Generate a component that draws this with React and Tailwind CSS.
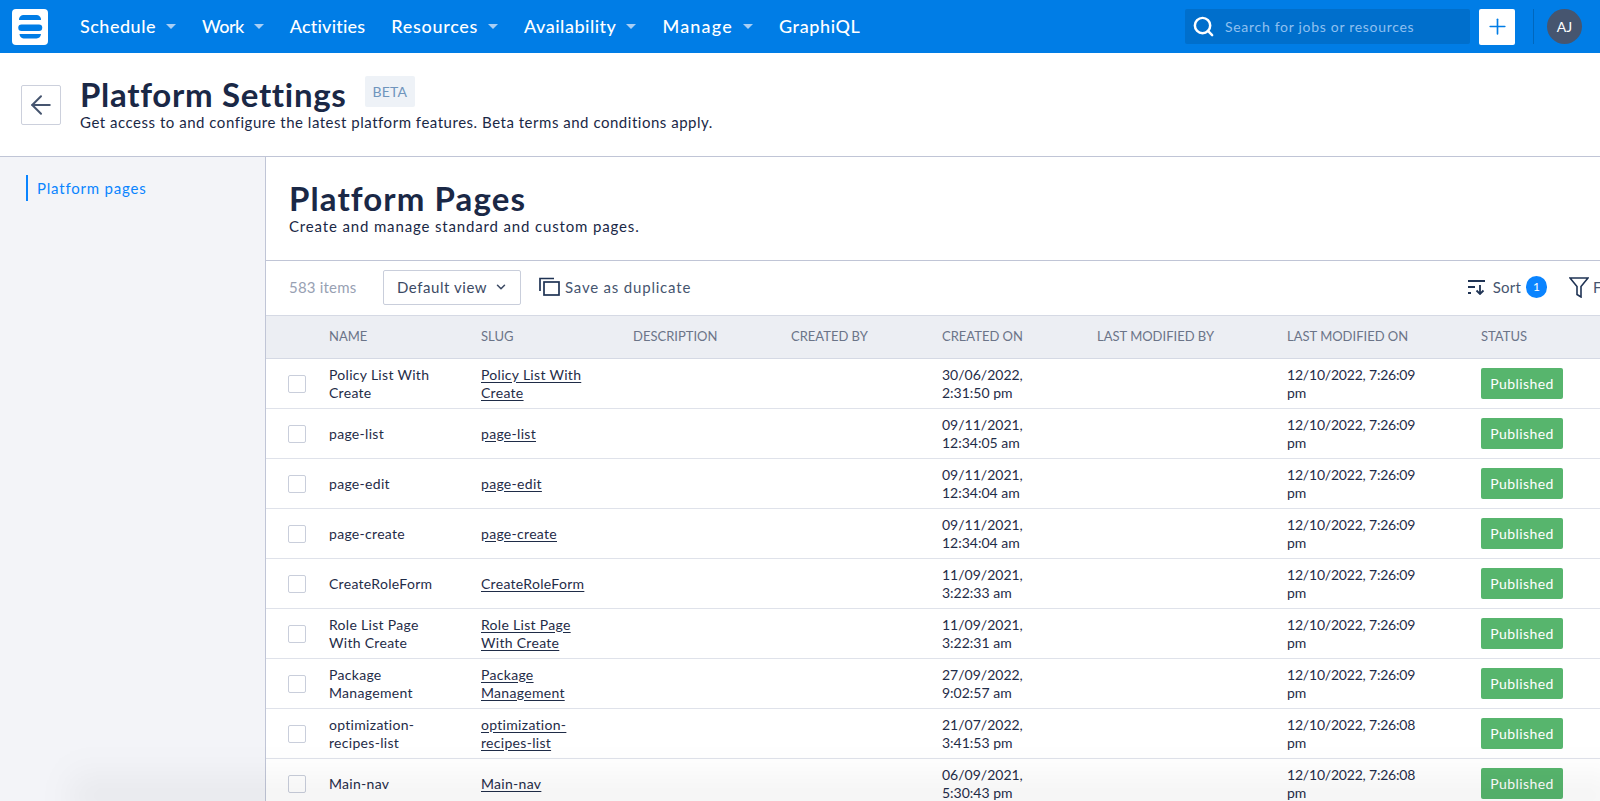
import { ArrowLeft, Search, Plus, ChevronDown } from "lucide-react";

const font = "font-['Lato','Liberation_Sans',sans-serif]";

const navItems = [
  { label: "Schedule", caret: true, track: "tracking-[0.5px]" },
  { label: "Work", caret: true, track: "tracking-[-0.5px]" },
  { label: "Activities", track: "tracking-[0.2px]" },
  { label: "Resources", caret: true, track: "tracking-[0.7px]" },
  { label: "Availability", caret: true, track: "tracking-[0.5px]" },
  { label: "Manage", caret: true, track: "tracking-[1.2px]" },
  { label: "GraphiQL", track: "tracking-[0.6px]" },
];

const rows = [
  ["Policy List With\nCreate", "30/06/2022,\n2:31:50 pm", "7:26:09"],
  ["page-list", "09/11/2021,\n12:34:05 am", "7:26:09"],
  ["page-edit", "09/11/2021,\n12:34:04 am", "7:26:09"],
  ["page-create", "09/11/2021,\n12:34:04 am", "7:26:09"],
  ["CreateRoleForm", "11/09/2021,\n3:22:33 am", "7:26:09"],
  ["Role List Page\nWith Create", "11/09/2021,\n3:22:31 am", "7:26:09"],
  ["Package\nManagement", "27/09/2022,\n9:02:57 am", "7:26:09"],
  ["optimization-\nrecipes-list", "21/07/2022,\n3:41:53 pm", "7:26:08"],
  ["Main-nav", "06/09/2021,\n5:30:43 pm", "7:26:08"],
];

const cols = "grid grid-cols-[63px_152px_152px_158px_151px_155px_190px_194px_1fr] items-center";

function Logo() {
  return (
    <div className="flex h-[36px] w-[36px] shrink-0 items-center justify-center rounded-[4px] bg-white">
      <svg width="36" height="36" viewBox="0 0 36 36" fill="#007de6">
        <path d="M11 6h14a4.5 4.5 0 0 1 4 5H7a4.5 4.5 0 0 1 4-5Z" />
        <path d="M9.5 15.5H27a3.2 3.2 0 0 1 0 6.5H9.5a3.2 3.2 0 0 1 0-6.5Z" />
        <path d="M7.5 25H29a5 5 0 0 1-4.5 4.5h-13A5 5 0 0 1 7.5 25Z" />
      </svg>
    </div>
  );
}

function TopBar() {
  return (
    <header className="flex h-[53px] shrink-0 items-center bg-[#007de6] pl-[12px] pr-[18px] text-white">
      <Logo />
      <nav className="ml-[32px] flex items-center gap-[26px] text-[18px] font-medium">
        {navItems.map((item) => (
          <div key={item.label} className="flex items-center gap-[10px]">
            <span className={item.track}>{item.label}</span>
            {item.caret && <span className="h-0 w-0 border-x-[5px] border-t-[5px] border-x-transparent border-t-[#a8cff5]" />}
          </div>
        ))}
      </nav>
      <div className="ml-auto flex h-[35px] w-[285px] items-center gap-[10px] rounded-[2px] bg-[#006fcc] pl-[7px]">
        <Search size={23} strokeWidth={2.6} className="text-white" />
        <span className="text-[14px] tracking-[0.7px] text-[#8fc0f0]">Search for jobs or resources</span>
      </div>
      <button className="ml-[9px] flex h-[36px] w-[36px] items-center justify-center rounded-[2px] bg-white text-[#007de6]">
        <Plus size={25} strokeWidth={1.6} />
      </button>
      <div className="ml-[18px] h-[35px] w-px bg-[#0067bd]" />
      <div className="ml-[13px] flex h-[35px] w-[35px] items-center justify-center rounded-full bg-[#46556f] text-[14px] text-white">AJ</div>
    </header>
  );
}

function PageHeader() {
  return (
    <section className="flex h-[104px] shrink-0 border-b border-[#c0c5d6] pl-[21px]">
      <button className="mt-[32px] flex h-[40px] w-[40px] items-center justify-center rounded-[2px] border border-[#ccd0dc] text-[#46556f]">
        <ArrowLeft size={30} strokeWidth={1.6} />
      </button>
      <div className="ml-[19px] pt-[22px]">
        <div className="flex items-start">
          <h1 className="text-[33px] font-bold leading-[38px] tracking-[0.7px] text-[#1a2846]">Platform Settings</h1>
          <span className="ml-[18px] mt-[1px] flex h-[31px] items-center rounded-[2px] bg-[#eef2f7] px-[8px] text-[14px] tracking-[0.2px] text-[#6f95bd]">BETA</span>
        </div>
        <p className="text-[15px] leading-[18px] tracking-[0.52px] text-[#1a2846]">Get access to and configure the latest platform features. Beta terms and conditions apply.</p>
      </div>
    </section>
  );
}

function Toolbar() {
  return (
    <div className="flex h-[54px] shrink-0 items-center pb-[2px] pl-[23px] text-[15px] tracking-[0.2px]">
      <span className="w-[70px] text-[#98a1b3]">583 items</span>
      <div className="ml-[24px] flex h-[35px] w-[138px] items-center justify-between rounded-[2px] border border-[#c9cedb] pl-[13px] pr-[12px] tracking-[0.55px] text-[#3c4a64]">
        <span>Default view</span>
        <ChevronDown size={14} strokeWidth={2.6} />
      </div>
      <svg className="ml-[18px] text-[#1f3354]" width="22" height="20" viewBox="0 0 22 20" fill="none" stroke="currentColor" strokeWidth="1.7">
        <path d="M1 14V1.5h14" />
        <rect x="5" y="5" width="15" height="13" />
      </svg>
      <span className="ml-[4px] tracking-[0.8px] text-[#46556f]">Save as duplicate</span>
      <div className="ml-auto flex items-center">
        <svg className="text-[#1f3354]" width="19" height="16" viewBox="0 0 19 16" fill="none" stroke="currentColor" strokeWidth="1.8">
          <path d="M1 2h17M1 8h7M1 14h3M13 6v9M9.5 11.5 13 15l3.5-3.5" />
        </svg>
        <span className="ml-[7px] text-[#46556f]">Sort</span>
        <span className="ml-[5px] flex h-[22px] w-[21px] items-center justify-center rounded-full bg-[#0a84ff] text-[12px] text-white">1</span>
        <svg className="ml-[22px] mr-[-4px] text-[#1f3354]" width="20" height="21" viewBox="0 0 20 21" fill="none" stroke="currentColor" strokeWidth="1.6">
          <path d="M1 1h18l-7 8.5V20l-4-2.5v-8Z" />
        </svg>
        <span className="ml-[8px] w-[7px] overflow-hidden text-[#46556f]">Filter</span>
      </div>
    </div>
  );
}

function TableHeader() {
  const heads = ["NAME", "SLUG", "DESCRIPTION", "CREATED BY", "CREATED ON", "LAST MODIFIED BY", "LAST MODIFIED ON", "STATUS"];
  return (
    <div className={`${cols} h-[44px] shrink-0 border-y border-[#d5d9e4] bg-[#eceef3] text-[13px] text-[#6b7488]`}>
      <div />
      {heads.map((h) => (
        <div key={h}>{h}</div>
      ))}
    </div>
  );
}

function Row({ name, created, time }) {
  return (
    <div className={`${cols} h-[50px] shrink-0 border-b border-[#dfe2ea] text-[14px] leading-[18px] text-[#1f2c48]`}>
      <div className="pl-[22px]">
        <div className="h-[18px] w-[18px] rounded-[2px] border border-[#c9cedb] bg-white" />
      </div>
      <div className="whitespace-pre-line tracking-[0.3px]">{name}</div>
      <div className="whitespace-pre-line tracking-[0.3px] underline underline-offset-2">{name}</div>
      <div />
      <div />
      <div className="whitespace-pre-line">{created}</div>
      <div />
      <div className="tracking-[-0.2px]">
        12/10/2022, {time}
        <br />
        pm
      </div>
      <div className="flex h-[31px] w-[82px] items-center justify-center rounded-[2px] bg-[#57b56d] tracking-[0.4px] text-white">Published</div>
    </div>
  );
}

export default function App() {
  return (
    <div className={`${font} relative flex h-[801px] w-[1600px] flex-col overflow-hidden bg-white`}>
      <TopBar />
      <PageHeader />
      <div className="flex min-h-0 flex-1">
        <aside className="w-[266px] shrink-0 border-r border-[#c0c5d6] bg-[#f3f4f8] pl-[26px] pt-[18px]">
          <div className="flex h-[26px] items-center border-l-2 border-[#0a84ff] pl-[9px] text-[15px] tracking-[0.8px] text-[#0a84ff]">Platform pages</div>
        </aside>
        <main className="flex min-w-0 flex-1 flex-col">
          <div className="h-[104px] shrink-0 border-b border-[#c0c5d6] pl-[23px] pt-[22px]">
            <h2 className="text-[33px] font-bold leading-[38px] tracking-[1.1px] text-[#1a2846]">Platform Pages</h2>
            <p className="text-[15px] leading-[19px] tracking-[0.85px] text-[#1a2846]">Create and manage standard and custom pages.</p>
          </div>
          <Toolbar />
          <TableHeader />
          {rows.map((r) => (
            <Row key={r[0]} name={r[0]} created={r[1]} time={r[2]} />
          ))}
        </main>
      </div>
      <div className="pointer-events-none absolute -bottom-[10px] left-[70px] -right-[20px] h-[50px] bg-gradient-to-b from-transparent to-[#00000012] blur-lg" />
    </div>
  );
}
